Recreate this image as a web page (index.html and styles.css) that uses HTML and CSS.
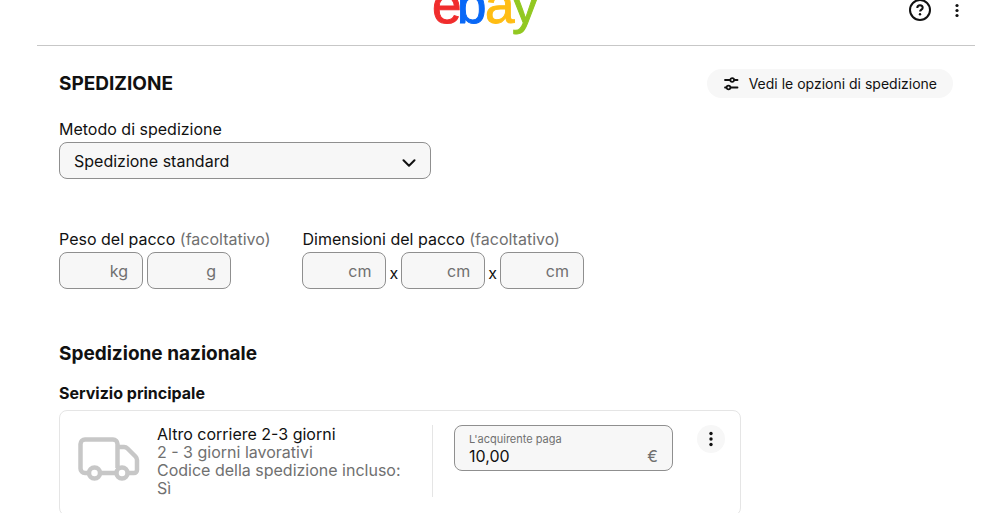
FILE: index.html
```html
<!DOCTYPE html>
<html lang="it">
<head>
  <meta charset="UTF-8">
  <meta name="viewport" content="width=device-width, initial-scale=1">
  <title>Spedizione</title>
  <link rel="stylesheet" href="styles.css">
</head>
<body>

<header class="header">
  <div class="logo">
    <svg width="110" height="36" viewBox="0 0 110 36" role="img" aria-label="ebay">
      <g class="logo-text">
        <text x="0" y="23" fill="#f02d2d" stroke="#f02d2d">e</text>
        <text x="25" y="23" fill="#0968f6" stroke="#0968f6">b</text>
        <text x="53" y="23" fill="#ffbd14" stroke="#ffbd14">a</text>
        <text x="80" y="23" fill="#92c821" stroke="#92c821">y</text>
      </g>
    </svg>
  </div>
  <div class="header-actions">
    <button class="icon-button" type="button" aria-label="Aiuto">
      <svg width="24" height="24" viewBox="0 0 24 24" fill="none" stroke="#111" stroke-width="2">
        <circle cx="12" cy="12" r="10"/>
        <path d="M9.3 9.9c0-1.700 1.200-2.700 2.700-2.700s2.700 1 2.700 2.500c0 1.900-2.600 2-2.600 3.900"/>
        <circle cx="12" cy="16.300" r="1.200" fill="#111" stroke="none"/>
      </svg>
    </button>
    <button class="icon-button" type="button" aria-label="Altro">
      <svg width="24" height="24" viewBox="0 0 24 24" fill="#111">
        <circle cx="12" cy="7.500" r="1.600"/>
        <circle cx="12" cy="12.500" r="1.600"/>
        <circle cx="12" cy="17.500" r="1.600"/>
      </svg>
    </button>
  </div>
</header>

<main class="content">

  <div class="title-row">
    <h1 class="title">SPEDIZIONE</h1>
    <button class="options-button" type="button">
      <svg width="16" height="16" viewBox="0 0 16 16" fill="none" stroke="#111" stroke-width="1.800" stroke-linecap="round">
        <path d="M2 4h5M11.500 4h3M2 11.500h1M8 11.500h6.500"/>
        <circle cx="9.200" cy="4" r="1.900"/>
        <circle cx="5.500" cy="11.500" r="1.900"/>
      </svg>
      Vedi le opzioni di spedizione
    </button>
  </div>

  <div class="method">
    <label class="label" for="method">Metodo di spedizione</label>
    <div class="select-box">
      <select id="method" class="field select">
        <option>Spedizione standard</option>
      </select>
      <svg class="select-arrow" width="14" height="8" viewBox="0 0 14 8" fill="none" stroke="#111" stroke-width="2" stroke-linecap="round" stroke-linejoin="round">
        <path d="M1.500 1.200L7 6.700l5.500-5.500"/>
      </svg>
    </div>
  </div>

  <div class="package">
    <div class="package-group">
      <label class="label" for="kg">Peso del pacco <span class="optional">(facoltativo)</span></label>
      <div class="package-fields">
        <input type="text" id="kg" class="field unit-field" placeholder="kg">
        <input type="text" class="field unit-field" placeholder="g" aria-label="Grammi">
      </div>
    </div>
    <div class="package-group">
      <label class="label" for="length">Dimensioni del pacco <span class="optional">(facoltativo)</span></label>
      <div class="package-fields dimensions">
        <input type="text" id="length" class="field unit-field" placeholder="cm">
        <span class="times">x</span>
        <input type="text" class="field unit-field" placeholder="cm" aria-label="Larghezza">
        <span class="times">x</span>
        <input type="text" class="field unit-field" placeholder="cm" aria-label="Altezza">
      </div>
    </div>
  </div>

  <h2 class="subtitle">Spedizione nazionale</h2>
  <h3 class="service-title">Servizio principale</h3>

  <div class="card">
    <div class="service">
      <svg class="truck" width="62" height="44" viewBox="0 0 62 44" fill="none" stroke="#c7c7c7" stroke-width="4.500" stroke-linejoin="round">
        <path d="M11 36H7a4.500 4.500 0 0 1-4.500-4.500V7A4.500 4.500 0 0 1 7 2.500h28A4.500 4.500 0 0 1 39.500 7v24"/>
        <path d="M39.500 10H46c1.500 0 2.500.500 3.500 1.500l8 8c1 1 1.500 2 1.500 3.500v10a3 3 0 0 1-3 3h-6"/>
        <path d="M22 36h16"/>
        <circle cx="16.500" cy="36" r="5.500"/>
        <circle cx="44" cy="36" r="5.500"/>
      </svg>
      <div class="service-text">
        <div class="service-name">Altro corriere 2-3 giorni</div>
        <div>2 - 3 giorni lavorativi</div>
        <div>Codice della spedizione incluso: Sì</div>
      </div>
    </div>
    <div class="price-column">
      <div class="price-field">
        <label class="price-label" for="price">L'acquirente paga</label>
        <div class="price-row">
          <input type="text" id="price" class="price-input" value="10,00">
          <span class="currency">€</span>
        </div>
      </div>
      <button class="more-button" type="button" aria-label="Altre azioni">
        <svg width="16" height="16" viewBox="0 0 16 16" fill="#111">
          <circle cx="8" cy="2.500" r="1.700"/>
          <circle cx="8" cy="8" r="1.700"/>
          <circle cx="8" cy="13.500" r="1.700"/>
        </svg>
      </button>
    </div>
  </div>

</main>

</body>
</html>
```

FILE: styles.css
```css
* {
  box-sizing: border-box;
}

body {
  margin: 0;
  padding: 0 23px 0 37px;
  background-color: white;
  color: #111111;
  font-family: Inter, "Liberation Sans", sans-serif;
  font-size: 16px;
  line-height: 18px;
  overflow: hidden;
}

h1,
h2,
h3 {
  margin: 0;
}

button,
input,
select {
  font-family: inherit;
  font-size: 16px;
  color: #111111;
}

button {
  border: none;
  padding: 0;
  cursor: pointer;
}

svg {
  display: block;
  flex-shrink: 0;
}

.header {
  display: flex;
  align-items: flex-start;
  height: 46px;
  border-bottom: 1px solid #c7c7c7;
}

.logo {
  flex: 1;
  display: flex;
  justify-content: center;
  padding-left: 28px;
}

.logo-text {
  font-family: "Liberation Sans", Arial, sans-serif;
  font-size: 53px;
  stroke-width: 1px;
}

.header-actions {
  display: flex;
  gap: 13px;
  margin-top: -2px;
  padding-right: 6px;
}

.icon-button {
  background: none;
}

.content {
  padding: 23px 22px 0;
}

.title-row {
  display: flex;
  align-items: center;
  justify-content: space-between;
}

.title {
  font-size: 19px;
  line-height: 28px;
}

.options-button {
  display: flex;
  align-items: center;
  gap: 10px;
  height: 29px;
  padding: 0 16px;
  border-radius: 15px;
  background-color: #f7f7f7;
  font-size: 14px;
}

.label {
  display: block;
  margin-bottom: 4px;
}

.optional {
  color: #707070;
}

.field {
  height: 37px;
  border: 1px solid #8f8f8f;
  border-radius: 8px;
  background-color: #f7f7f7;
  padding: 0 14px;
}

.method {
  max-width: 372px;
  margin-top: 22px;
}

.select-box {
  position: relative;
}

.select {
  display: block;
  width: 100%;
  appearance: none;
}

.select-arrow {
  position: absolute;
  right: 15px;
  top: 17px;
  pointer-events: none;
}

.package {
  display: flex;
  gap: 32px;
  margin-top: 51px;
}

.package-fields {
  display: flex;
  align-items: center;
  gap: 4px;
}

.dimensions {
  gap: 3px;
}

.unit-field {
  width: 84px;
  text-align: right;
}

.unit-field::placeholder {
  color: #707070;
}

.times {
  padding-top: 4px;
}

.subtitle {
  margin-top: 53px;
  font-size: 19px;
  line-height: 24px;
}

.service-title {
  margin-top: 18px;
  font-size: 16px;
  line-height: 18px;
}

.card {
  display: flex;
  max-width: 682px;
  margin-top: 8px;
  padding: 14px 15px 18px 18px;
  border: 1px solid #e5e5e5;
  border-radius: 8px;
}

.service {
  flex: 1;
  display: flex;
  align-items: flex-start;
  gap: 17px;
  padding-right: 18px;
  border-right: 1px solid #e5e5e5;
}

.truck {
  margin-top: 12px;
}

.service-text {
  color: #707070;
}

.service-name {
  color: #111111;
}

.price-column {
  display: flex;
  align-items: flex-start;
  gap: 24px;
  padding-left: 21px;
}

.price-field {
  width: 219px;
  height: 46px;
  padding: 5px 14px;
  border: 1px solid #8f8f8f;
  border-radius: 8px;
  background-color: #f7f7f7;
}

.price-label {
  display: block;
  font-size: 11px;
  line-height: 16px;
  color: #707070;
}

.price-row {
  display: flex;
  justify-content: space-between;
}

.price-input {
  flex: 1;
  min-width: 0;
  height: 18px;
  padding: 0;
  border: none;
  background: none;
}

.currency {
  color: #707070;
}

.more-button {
  display: flex;
  align-items: center;
  justify-content: center;
  width: 28px;
  height: 28px;
  border-radius: 50%;
  background-color: #f7f7f7;
}
```
